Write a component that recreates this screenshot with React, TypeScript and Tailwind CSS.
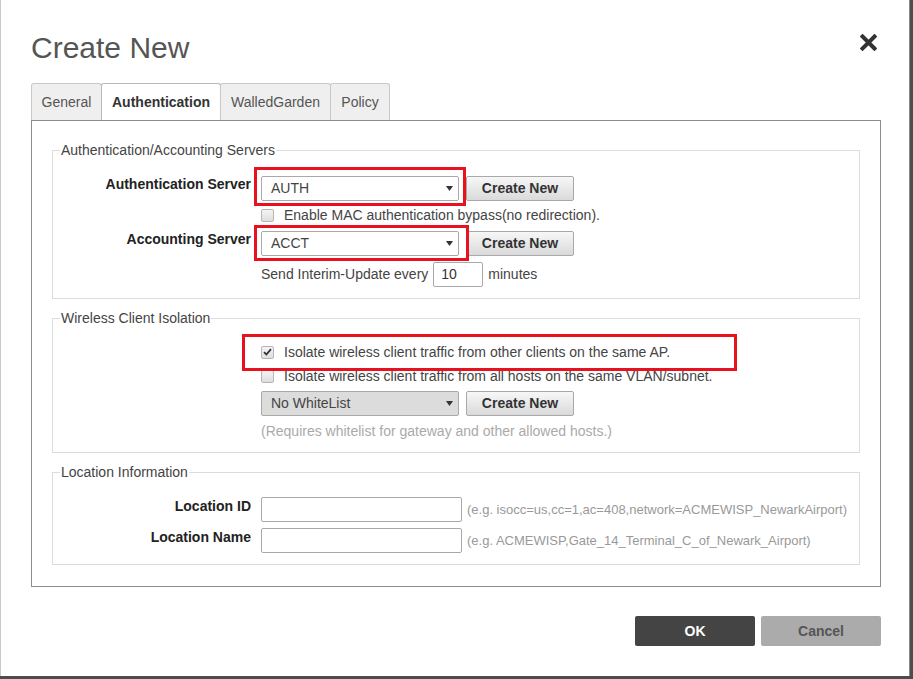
import React from "react";

const Arrow = () => (
  <svg width="7" height="5" viewBox="0 0 7 5" className="shrink-0">
    <path d="M0 0 L7 0 L3.5 5 Z" fill="#333" />
  </svg>
);

const Select = ({ value, gray = false }: { value: string; gray?: boolean }) => (
  <div
    className={`flex h-[25px] w-[198px] items-center justify-between rounded-[2px] border border-[#a9a9a9] pl-[9px] pr-[5px] text-[14px] text-[#444] ${
      gray ? "bg-[#dcdcdc]" : "bg-white"
    }`}
  >
    <span>{value}</span>
    <Arrow />
  </div>
);

const CreateBtn = () => (
  <button className="ml-[7px] h-[25px] w-[108px] rounded-[2px] border border-[#a9a9a9] bg-gradient-to-b from-[#f7f7f7] to-[#dadada] text-[14px] font-bold text-[#333]">
    Create New
  </button>
);

const Check = ({ checked = false }: { checked?: boolean }) => (
  <span className="flex h-[13px] w-[13px] shrink-0 items-center justify-center rounded-[2px] border border-[#b5b5b5] bg-gradient-to-b from-[#f4f4f4] to-[#dedede]">
    {checked && (
      <svg width="9" height="8" viewBox="0 0 9 8">
        <path d="M1 4.2 L3.4 6.5 L8 1.2" fill="none" stroke="#333" strokeWidth="1.8" />
      </svg>
    )}
  </span>
);

const CheckRow = ({ label, checked }: { label: string; checked?: boolean }) => (
  <div className="flex h-[18px] items-center gap-[10px] text-[14px] text-[#444]">
    <Check checked={checked} />
    <span>{label}</span>
  </div>
);

const Legend = ({ children }: { children: React.ReactNode }) => (
  <legend className="ml-[7px] px-[1px] text-[14px] leading-[16px] text-[#444]">{children}</legend>
);

const Label = ({ children }: { children: React.ReactNode }) => (
  <div className="w-[208px] shrink-0 pr-[10px] text-right text-[14px] font-bold leading-[17px] text-[#222]">
    {children}
  </div>
);

const RedBox = ({ className }: { className: string }) => (
  <div className={`pointer-events-none absolute z-10 border-[3px] border-[#e8111d] ${className}`} />
);

export default function App() {
  return (
    <div
      className="h-[679px] w-[913px] overflow-hidden bg-[#4d4d4d]"
      style={{ fontFamily: '"Liberation Sans", Arial, sans-serif' }}
    >
      <div className="h-[676px] w-[910px] border-l border-r border-[#c9c9c9] border-r-[#8a8a8a] bg-white pl-[30px] pr-[29px]">
        {/* Header */}
        <div className="flex items-start justify-between pt-[31px]">
          <h1 className="text-[30px] leading-[34px] font-normal text-[#555]">Create New</h1>
          <svg width="17" height="17" viewBox="0 0 17 17" className="mr-[3px] mt-[3px]">
            <path d="M2.5 2.5 L14.5 14.5 M14.5 2.5 L2.5 14.5" stroke="#333" strokeWidth="4" strokeLinecap="square" />
          </svg>
        </div>

        {/* Tabs */}
        <div className="mt-[18px] flex h-[37px] text-[14px]">
          <div className="flex w-[71px] items-center justify-center rounded-t-[3px] border border-b-0 border-[#c8c8c8] bg-[#efefef] text-[#555]">
            General
          </div>
          <div className="-ml-px flex w-[120px] items-center justify-center rounded-t-[3px] border border-b-0 border-[#b8b8b8] bg-white font-bold text-[#333]">
            Authentication
          </div>
          <div className="-ml-px flex w-[111px] items-center justify-center rounded-t-[3px] border border-b-0 border-[#c8c8c8] bg-[#efefef] text-[#555]">
            WalledGarden
          </div>
          <div className="-ml-px flex w-[60px] items-center justify-center rounded-t-[3px] border border-b-0 border-[#c8c8c8] bg-[#efefef] text-[#555]">
            Policy
          </div>
        </div>

        {/* Panel */}
        <div className="w-[850px] border border-[#8c8c8c] px-[20px] pt-[21px] pb-[21px]">
          <fieldset className="border border-[#dcdcdc] px-0 pt-[18px] pb-[11px]">
            <Legend>Authentication/Accounting Servers</Legend>
            <div className="flex items-start">
              <Label>Authentication Server</Label>
              <div className="relative flex">
                <RedBox className="-left-[7px] -top-[9px] h-[39px] w-[212px]" />
                <Select value="AUTH" />
                <CreateBtn />
              </div>
            </div>
            <div className="mt-[5px] flex">
              <div className="w-[208px] shrink-0" />
              <CheckRow label="Enable MAC authentication bypass(no redirection)." />
            </div>
            <div className="mt-[7px] flex items-start">
              <Label>Accounting Server</Label>
              <div className="relative flex">
                <RedBox className="-left-[7px] -top-[6px] h-[36px] w-[215px]" />
                <Select value="ACCT" />
                <CreateBtn />
              </div>
            </div>
            <div className="mt-[6px] flex items-center text-[14px] text-[#444]">
              <div className="w-[208px] shrink-0" />
              <span>Send Interim-Update every</span>
              <div className="ml-[5px] flex h-[25px] w-[50px] items-center rounded-[2px] border border-[#a9a9a9] pl-[7px] text-[#333]">
                10
              </div>
              <span className="ml-[5px]">minutes</span>
            </div>
          </fieldset>

          <fieldset className="mt-[11px] border border-[#dcdcdc] px-0 pt-[17px] pb-[12px]">
            <Legend>Wireless Client Isolation</Legend>
            <div className="flex">
              <div className="w-[208px] shrink-0" />
              <div className="relative flex flex-col">
                <RedBox className="-left-[19px] -top-[9px] h-[37px] w-[495px]" />
                <CheckRow checked label="Isolate wireless client traffic from other clients on the same AP." />
                <div className="mt-[6px]">
                  <CheckRow label="Isolate wireless client traffic from all hosts on the same VLAN/subnet." />
                </div>
                <div className="mt-[6px] flex">
                  <Select value="No WhiteList" gray />
                  <CreateBtn />
                </div>
                <div className="mt-[7px] text-[14px] leading-[17px] text-[#aaa]">
                  (Requires whitelist for gateway and other allowed hosts.)
                </div>
              </div>
            </div>
          </fieldset>

          <fieldset className="mt-[11px] border border-[#dcdcdc] px-0 pt-[17px] pb-[11px]">
            <Legend>Location Information</Legend>
            <div className="flex items-start">
              <Label>
                <div className="pt-[1px]">Location ID</div>
              </Label>
              <div className="h-[25px] w-[201px] rounded-[2px] border border-[#a9a9a9]" />
              <span className="ml-[5px] text-[13px] leading-[25px] text-[#999]">
                (e.g. isocc=us,cc=1,ac=408,network=ACMEWISP_NewarkAirport)
              </span>
            </div>
            <div className="mt-[6px] flex items-start">
              <Label>
                <div className="pt-[1px]">Location Name</div>
              </Label>
              <div className="h-[25px] w-[201px] rounded-[2px] border border-[#a9a9a9]" />
              <span className="ml-[5px] text-[13px] leading-[25px] text-[#999]">
                (e.g. ACMEWISP,Gate_14_Terminal_C_of_Newark_Airport)
              </span>
            </div>
          </fieldset>
        </div>

        {/* Footer */}
        <div className="mt-[29px] flex w-[850px] justify-end gap-[6px]">
          <button className="h-[30px] w-[120px] rounded-[2px] bg-[#444] text-[14px] font-bold text-white">OK</button>
          <button className="h-[30px] w-[120px] rounded-[2px] bg-[#ababab] text-[14px] font-bold text-[#555]">Cancel</button>
        </div>
      </div>
    </div>
  );
}
